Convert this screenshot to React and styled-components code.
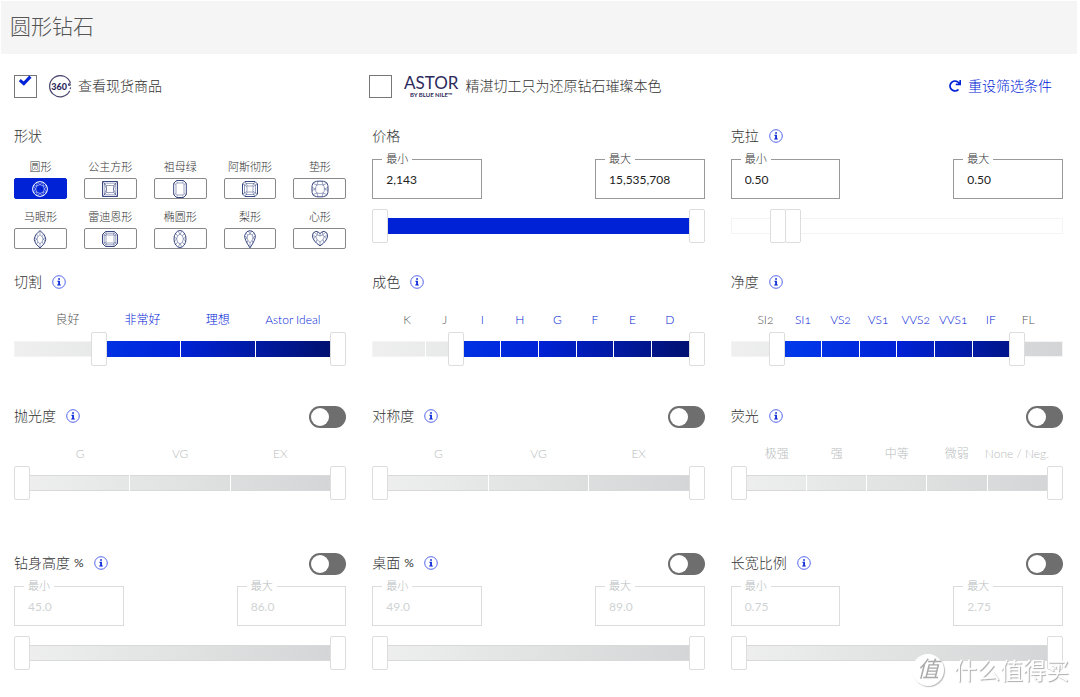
import React, { useId, useState } from 'react';
import styled, { createGlobalStyle } from 'styled-components';
import { FaRedo } from 'react-icons/fa';

const GlobalStyle = createGlobalStyle`
    * {
        box-sizing: border-box;
    }
    body {
        margin: 0;
        background: #fff;
        color: #333;
        font-family: Lato, 'Noto Sans CJK SC', sans-serif;
        font-size: 14px;
        font-weight: 300;
        line-height: 20px;
    }
    button, input {
        font: inherit;
        color: inherit;
    }
`;

const thumbWidth = 16;

const shapes = [
    { key: 'round', name: '圆形' },
    { key: 'princess', name: '公主方形' },
    { key: 'emerald', name: '祖母绿' },
    { key: 'asscher', name: '阿斯彻形' },
    { key: 'cushion', name: '垫形' },
    { key: 'marquise', name: '马眼形' },
    { key: 'radiant', name: '雷迪恩形' },
    { key: 'oval', name: '椭圆形' },
    { key: 'pear', name: '梨形' },
    { key: 'heart', name: '心形' },
];

const shapePaths = {
    round: (
        <>
            <circle cx="9" cy="9" r="7.4" />
            <path d="M9 4.6 12.1 5.9 13.4 9 12.1 12.1 9 13.4 5.9 12.1 4.6 9 5.9 5.9Z" />
            <path d="M9 4.6 6.2 2.2M9 4.6 11.8 2.2M12.1 5.9V2.3M12.1 5.9H15.7M13.4 9 15.8 6.2M13.4 9 15.8 11.8M12.1 12.1H15.7M12.1 12.1V15.7M9 13.4 11.8 15.8M9 13.4 6.2 15.8M5.9 12.1V15.7M5.9 12.1H2.3M4.6 9 2.2 11.8M4.6 9 2.2 6.2M5.9 5.9H2.3M5.9 5.9V2.3" />
        </>
    ),
    princess: (
        <>
            <path d="M1.5 1.5H16.5V16.5H1.5Z" />
            <path d="M5.5 5.5H12.5V12.5H5.5ZM3.2 3.2H14.8V14.8H3.2ZM1.5 1.5 5.5 5.5M16.5 1.5 12.5 5.5M16.5 16.5 12.5 12.5M1.5 16.5 5.5 12.5M3.2 3.2 5.5 9 3.2 14.8M14.8 3.2 12.5 9 14.8 14.8" />
        </>
    ),
    emerald: (
        <>
            <path d="M5.5.5H12.5L15.3 3.3V14.7L12.5 17.5H5.5L2.7 14.7V3.3Z" />
            <path d="M6.3 3H11.7L13 4.3V13.7L11.7 15H6.3L5 13.7V4.3ZM5.5.5 6.3 3M12.5.5 11.7 3M15.3 3.3 13 4.3M15.3 14.7 13 13.7M12.5 17.5 11.7 15M5.5 17.5 6.3 15M2.7 14.7 5 13.7M2.7 3.3 5 4.3" />
        </>
    ),
    asscher: (
        <>
            <path d="M4 1.5H14L16.5 4V14L14 16.5H4L1.5 14V4Z" />
            <path d="M5 3.5H13L14.5 5V13L13 14.5H5L3.5 13V5ZM6.5 6H11.5L12 6.5V11.5L11.5 12H6.5L6 11.5V6.5ZM4 1.5 6.5 6M14 1.5 11.5 6M16.5 4 12 6.5M16.5 14 12 11.5M14 16.5 11.5 12M4 16.5 6.5 12M1.5 14 6 11.5M1.5 4 6 6.5" />
        </>
    ),
    cushion: (
        <>
            <path d="M5.5 1.3Q9 .9 12.5 1.3Q16.7 1.8 16.9 5.5Q17.2 9 16.9 12.5Q16.7 16.2 12.5 16.7Q9 17.1 5.5 16.7Q1.3 16.2 1.1 12.5Q.8 9 1.1 5.5Q1.3 1.8 5.5 1.3Z" />
            <path d="M6 5Q9 4 12 5Q13.4 5.5 13.4 9Q13.4 12.5 12 13Q9 14 6 13Q4.6 12.5 4.6 9Q4.6 5.5 6 5ZM7 1.2 6 5 2.1 3.4M11 1.2 12 5 15.9 3.4M1 7.5 4.6 9 1 10.5M17 7.5 13.4 9 17 10.5M7 16.8 6 13 2.1 14.6M11 16.8 12 13 15.9 14.6" />
        </>
    ),
    marquise: (
        <>
            <path d="M9 .5Q14.8 5 14.8 9.2Q14.8 13.4 9 18Q3.2 13.4 3.2 9.2Q3.2 5 9 .5Z" />
            <path d="M9 4.8 11.2 6.6 12 9.2 11.2 11.8 9 13.8 6.8 11.8 6 9.2 6.8 6.6ZM9 .5V4.8M9 18V13.8M11.2 6.6 12.6 4M6.8 6.6 5.4 4M12 9.2 14.6 7.4M12 9.2 14.6 11M6 9.2 3.4 7.4M6 9.2 3.4 11M11.2 11.8 12.6 14.4M6.8 11.8 5.4 14.4" />
        </>
    ),
    radiant: (
        <>
            <path d="M4.5 1.5H13.5L16.5 4.5V13.5L13.5 16.5H4.5L1.5 13.5V4.5Z" />
            <path d="M5.5 5H12.5L13 5.5V12.5L12.5 13H5.5L5 12.5V5.5ZM5 3.2H13L14.8 5V13L13 14.8H5L3.2 13V5ZM4.5 1.5 5.5 5M13.5 1.5 12.5 5M16.5 4.5 13 5.5M16.5 13.5 13 12.5M13.5 16.5 12.5 13M4.5 16.5 5.5 13M1.5 13.5 5 12.5M1.5 4.5 5 5.5" />
        </>
    ),
    oval: (
        <>
            <ellipse cx="9" cy="9" rx="6" ry="8.5" />
            <path d="M9 4.2 11.4 5.8 12.4 9 11.4 12.2 9 13.8 6.6 12.2 5.6 9 6.6 5.8ZM9 4.2 7 1.2M9 4.2 11 1.2M11.4 5.8 13.4 3.4M12.4 9 14.8 6.6M12.4 9 14.8 11.4M11.4 12.2 13.4 14.6M9 13.8 11 16.8M9 13.8 7 16.8M6.6 12.2 4.6 14.6M5.6 9 3.2 11.4M5.6 9 3.2 6.6M6.6 5.8 4.6 3.4" />
        </>
    ),
    pear: (
        <>
            <path d="M9 .8Q13 .8 14.3 5.6Q14.8 9.5 9 17.8Q3.2 9.5 3.7 5.6Q5 .8 9 .8Z" />
            <path d="M9 4 11.2 5 12 7.6 11 10.4 9 13 7 10.4 6 7.6 6.8 5ZM9 4 7.4 1M9 4 10.6 1M11.2 5 13.2 3M12 7.6 14.3 6M12 7.6 13.6 9.8M6.8 5 4.8 3M6 7.6 3.7 6M6 7.6 4.4 9.8M9 13V17.8M11 10.4 12 12.8M7 10.4 6 12.8" />
        </>
    ),
    heart: (
        <>
            <path d="M9 3.6Q11 1.2 13.2 1.4Q16.6 2.2 16.6 5.8Q16 11.4 9 15.8Q2 11.4 1.4 5.8Q1.4 2.2 4.8 1.4Q7 1.2 9 3.6Z" />
            <path d="M9 6 11.8 4.8 13.2 6.6 12 9.6 9 12 6 9.6 4.8 6.6 6.2 4.8ZM9 6V3.6M11.8 4.8 11.4 2M11.8 4.8 14.6 2.2M13.2 6.6 16.6 5.4M13.2 6.6 15.6 9M12 9.6 13 12.8M9 12V15.8M6 9.6 5 12.8M4.8 6.6 1.4 5.4M4.8 6.6 2.4 9M6.2 4.8 6.6 2M6.2 4.8 3.4 2.2" />
        </>
    ),
};

const InfoButton = ({ about }) => (
    <Info type="button" aria-label={about}>
        <svg width="14" height="14" viewBox="0 0 14 14">
            <circle cx="7" cy="7" r="6.3" fill="none" stroke="#5566ee" />
            <path
                d="M6.2 3.2H7.9V4.7H6.2ZM5.4 5.7H7.9V9.4H8.8V10.5H5.2V9.4H6.2V6.8H5.4Z"
                fill="#0022d6"
            />
        </svg>
    </Info>
);

const FilterHead = ({ title, unit, info, toggle }) => (
    <Head>
        <h2>{title}</h2>
        {unit && <Unit>{unit}</Unit>}
        {info && <InfoButton about={title} />}
        {toggle && <Toggle type="checkbox" role="switch" aria-label={title} />}
    </Head>
);

const Bound = ({ label, value, muted }) => {
    const id = useId();
    return (
        <BoundBox $muted={muted}>
            <legend>
                <label htmlFor={id}>{label}</label>
            </legend>
            <input id={id} type="text" defaultValue={value} disabled={muted} />
        </BoundBox>
    );
};

const Bounds = ({ min, max, muted }) => (
    <BoundsRow>
        <Bound label="最小" value={min} muted={muted} />
        <Bound label="最大" value={max} muted={muted} />
    </BoundsRow>
);

const RangeSlider = ({ title, from = 0, to = 1000, segments = 1, tone = 'grade', muted }) => {
    const [low, setLow] = useState(from);
    const [high, setHigh] = useState(to);
    return (
        <SliderBox>
            <Track $tone={tone} $muted={muted} />
            {!muted && tone !== 'empty' && (
                <Fill
                    $tone={tone}
                    style={{
                        clipPath: `inset(0 ${100 - high / 10}% 0 ${low / 10}%)`,
                    }}
                />
            )}
            <Ticks>
                {Array.from({ length: segments }, (_, i) => (
                    <span key={i} />
                ))}
            </Ticks>
            <Range
                type="range"
                aria-label={`${title} 最小`}
                max="1000"
                value={low}
                disabled={muted}
                onChange={(e) => setLow(Math.min(Number(e.target.value), high))}
            />
            <Range
                type="range"
                aria-label={`${title} 最大`}
                max="1000"
                value={high}
                disabled={muted}
                onChange={(e) => setHigh(Math.max(Number(e.target.value), low))}
            />
        </SliderBox>
    );
};

const GradeFilter = ({ title, grades, active = [], from, to, muted }) => (
    <section>
        <FilterHead title={title} info toggle={muted} />
        <Grades $muted={muted}>
            {grades.map((grade) => (
                <Grade key={grade} $active={active.includes(grade)}>
                    {grade}
                </Grade>
            ))}
        </Grades>
        <RangeSlider
            title={title}
            segments={grades.length}
            from={from}
            to={to}
            muted={muted}
        />
    </section>
);

const NumberFilter = ({ title, unit, info, min, max, muted, ...slider }) => (
    <section>
        <FilterHead title={title} unit={unit} info={info} toggle={muted} />
        <Bounds min={min} max={max} muted={muted} />
        <RangeSlider title={title} muted={muted} {...slider} />
    </section>
);

const ShapeFilter = () => {
    const [picked, setPicked] = useState('round');
    return (
        <section>
            <FilterHead title="形状" />
            <ShapeGrid>
                {shapes.map(({ key, name }) => (
                    <div key={key}>
                        <ShapeName id={`shape-${key}`}>{name}</ShapeName>
                        <ShapeButton
                            type="button"
                            aria-labelledby={`shape-${key}`}
                            aria-pressed={picked === key}
                            $picked={picked === key}
                            onClick={() => setPicked(key)}
                        >
                            <svg width="18" height="18" viewBox="0 0 18 18">
                                {shapePaths[key]}
                            </svg>
                        </ShapeButton>
                    </div>
                ))}
            </ShapeGrid>
        </section>
    );
};

const CheckBox = ({ id, initial }) => {
    const [checked, setChecked] = useState(initial);
    return (
        <CheckWrapper>
            <input
                id={id}
                type="checkbox"
                checked={checked}
                onChange={() => setChecked(!checked)}
            />
            {checked && (
                <svg width="23" height="23" viewBox="0 0 23 23">
                    <path d="M5.8 5.2 9.8 8.6 16.4 1.6" />
                </svg>
            )}
        </CheckWrapper>
    );
};

const App = () => (
    <>
        <GlobalStyle />
        <TitleBar>
            <h1>圆形钻石</h1>
        </TitleBar>
        <Content>
            <TopBar>
                <Option>
                    <CheckBox id="in-stock" initial={true} />
                    <Spin width="24" height="24" viewBox="0 0 24 24">
                        <path d="M22.4 8.2A10.6 10.6 0 1 0 21.8 15.8" />
                        <path d="M22.6 12.4 22.2 14.2" />
                        <circle cx="21.4" cy="9.6" r=".9" />
                        <text x="11.2" y="15.3" textAnchor="middle">
                            360
                        </text>
                    </Spin>
                    <label htmlFor="in-stock">查看现货商品</label>
                </Option>
                <Option>
                    <CheckBox id="astor" initial={false} />
                    <AstorLogo>
                        <b>ASTOR</b>
                        <small>BY BLUE NILE™</small>
                    </AstorLogo>
                    <label htmlFor="astor">精湛切工只为还原钻石璀璨本色</label>
                </Option>
                <Reset type="button">
                    <FaRedo size={12} />
                    重设筛选条件
                </Reset>
            </TopBar>
            <FilterRow $space={23}>
                <ShapeFilter />
                <NumberFilter title="价格" min="2,143" max="15,535,708" tone="solid" />
                <NumberFilter
                    title="克拉"
                    info
                    min="0.50"
                    max="0.50"
                    tone="empty"
                    from={123}
                    to={171}
                />
            </FilterRow>
            <FilterRow $space={40}>
                <GradeFilter
                    title="切割"
                    grades={['良好', '非常好', '理想', 'Astor Ideal']}
                    active={['非常好', '理想', 'Astor Ideal']}
                    from={242}
                />
                <GradeFilter
                    title="成色"
                    grades={['K', 'J', 'I', 'H', 'G', 'F', 'E', 'D']}
                    active={['I', 'H', 'G', 'F', 'E', 'D']}
                    from={238}
                />
                <GradeFilter
                    title="净度"
                    grades={['SI2', 'SI1', 'VS2', 'VS1', 'VVS2', 'VVS1', 'IF', 'FL']}
                    active={['SI1', 'VS2', 'VS1', 'VVS2', 'VVS1', 'IF']}
                    from={121}
                    to={880}
                />
            </FilterRow>
            <FilterRow $space={53}>
                <GradeFilter title="抛光度" grades={['G', 'VG', 'EX']} muted />
                <GradeFilter title="对称度" grades={['G', 'VG', 'EX']} muted />
                <GradeFilter
                    title="荧光"
                    grades={['极强', '强', '中等', '微弱', 'None / Neg.']}
                    muted
                />
            </FilterRow>
            <FilterRow $space={0}>
                <NumberFilter title="钻身高度" unit="%" info min="45.0" max="86.0" muted />
                <NumberFilter title="桌面" unit="%" info min="49.0" max="89.0" muted />
                <NumberFilter title="长宽比例" info min="0.75" max="2.75" muted />
            </FilterRow>
        </Content>
        <Watermark>
            <span>值</span>
            什么值得买
        </Watermark>
    </>
);

const TitleBar = styled.header`
    margin: 1px 3px 0 1px;
    padding: 11px 9px 14px;
    background: #f5f5f5;
    h1 {
        margin: 0;
        color: #555;
        font-size: 21px;
        font-weight: 300;
        line-height: 28px;
    }
`;

const Content = styled.main`
    padding: 21px 17px 26px 14px;
`;

const TopBar = styled.div`
    display: grid;
    grid-template-columns: repeat(3, 1fr);
    gap: 16px;
    align-items: center;
    margin-bottom: 28px;
`;

const Option = styled.div`
    display: flex;
    align-items: center;
    height: 23px;
    white-space: nowrap;
    label {
        padding-bottom: 2px;
    }
`;

const CheckWrapper = styled.span`
    display: grid;
    flex: none;
    input,
    svg {
        grid-area: 1 / 1;
    }
    input {
        appearance: none;
        width: 23px;
        height: 23px;
        margin: 0;
        border: 1px solid #777;
        background: #fff;
    }
    svg {
        pointer-events: none;
        fill: none;
        stroke: #0022d6;
        stroke-width: 3;
    }
`;

const Spin = styled.svg`
    flex: none;
    margin: 0 6px 0 11px;
    fill: none;
    stroke: #4a466e;
    stroke-width: 1.2;
    text {
        fill: #2d2a5c;
        stroke: none;
        font-size: 9px;
        font-weight: 900;
    }
`;

const AstorLogo = styled.span`
    display: flex;
    flex-direction: column;
    align-items: center;
    margin: 0 7px 0 12px;
    padding-bottom: 1px;
    color: #2d2a5c;
    b {
        font-size: 17px;
        font-weight: 400;
        line-height: 16px;
    }
    small {
        font-size: 6px;
        font-weight: 700;
        line-height: 7px;
    }
`;

const Reset = styled.button`
    display: flex;
    align-items: center;
    justify-self: end;
    gap: 7px;
    margin-right: 11px;
    padding: 0 0 2px;
    border: 0;
    background: none;
    color: #0022d6;
    cursor: pointer;
`;

const FilterRow = styled.div`
    display: grid;
    grid-template-columns: repeat(3, minmax(0, 1fr));
    gap: 26px;
    margin-bottom: ${(props) => props.$space}px;
`;

const Head = styled.div`
    display: flex;
    align-items: center;
    height: 20px;
    h2 {
        margin: 0;
        font-size: 14px;
        font-weight: 300;
    }
`;

const Unit = styled.span`
    margin-left: 4px;
    font-size: 12px;
    font-weight: 400;
`;

const Info = styled.button`
    display: flex;
    margin: 0 0 1px 10px;
    padding: 0;
    border: 0;
    background: none;
    cursor: pointer;
`;

const Toggle = styled.input`
    appearance: none;
    display: flex;
    width: 37px;
    height: 22px;
    margin: 2px 0 0 auto;
    padding: 2px;
    border-radius: 11px;
    background: #6e6e6e;
    &::before {
        content: '';
        width: 18px;
        height: 18px;
        border-radius: 50%;
        background: #fff;
    }
    &:checked {
        justify-content: flex-end;
        background: #0022d6;
    }
`;

const ShapeGrid = styled.div`
    display: grid;
    grid-template-columns: repeat(5, minmax(0, 1fr));
    gap: 10px 17px;
    margin-top: 13px;
`;

const ShapeName = styled.div`
    margin-bottom: 3px;
    font-size: 11px;
    line-height: 16px;
    text-align: center;
    white-space: nowrap;
`;

const ShapeButton = styled.button`
    display: flex;
    align-items: center;
    justify-content: center;
    width: 100%;
    height: 21px;
    padding: 0;
    border: 1px solid ${(props) => (props.$picked ? '#0022d6' : '#888')};
    border-radius: 2px;
    background: ${(props) => (props.$picked ? '#0022d6' : '#fff')};
    cursor: pointer;
    svg {
        fill: none;
        stroke: ${(props) => (props.$picked ? '#fff' : '#3a4884')};
        stroke-width: 0.5;
    }
    svg > :first-child {
        stroke-width: 1;
    }
`;

const BoundsRow = styled.div`
    display: flex;
    justify-content: space-between;
    margin-top: 7px;
`;

const BoundBox = styled.fieldset`
    width: 33%;
    min-width: 0;
    height: 46px;
    margin: 0;
    padding: 0 13px;
    border: 1px solid ${(props) => (props.$muted ? '#dcdcdc' : '#999')};
    color: ${(props) => (props.$muted ? '#b8bcbd' : '#333')};
    legend {
        margin-left: -4px;
        padding: 0 4px;
        font-size: 11px;
        line-height: 12px;
    }
    label {
        display: block;
    }
    input {
        display: block;
        width: 100%;
        height: 28px;
        padding: 0;
        border: 0;
        outline: 0;
        background: none;
        color: ${(props) => (props.$muted ? '#d0d3d4' : '#222')};
        font-size: 12px;
        font-weight: 400;
    }
`;

const Grades = styled.div`
    display: flex;
    margin: 18px 0 2px;
    padding: 0 ${thumbWidth}px;
    color: ${(props) => (props.$muted ? '#b8bcbd' : '#555')};
    font-size: 12px;
    font-variant-numeric: oldstyle-nums;
`;

const Grade = styled.span`
    flex: 1 1 0;
    min-width: 0;
    display: flex;
    justify-content: center;
    white-space: nowrap;
    color: ${(props) => (props.$active ? '#0022d6' : 'inherit')};
`;

const SliderBox = styled.div`
    display: grid;
    align-items: center;
    margin-top: 10px;
    ${Grades} + & {
        margin-top: 0;
    }
    & > * {
        grid-area: 1 / 1;
    }
`;

const Track = styled.div`
    height: 16px;
    border: 1px solid ${(props) => (props.$muted ? '#d8dada' : '#f4f4f4')};
    background: ${(props) =>
        props.$tone === 'empty'
            ? '#fff'
            : 'linear-gradient(to right, #efefef, #e0e3e2 50%, #d3d4d6)'};
`;

const Fill = styled.div`
    height: 16px;
    background: ${(props) =>
        props.$tone === 'solid'
            ? '#0022d6'
            : 'linear-gradient(to right, #0045f5, #0022d6 50%, #000f66)'};
`;

const Ticks = styled.div`
    z-index: 1;
    display: flex;
    height: 16px;
    padding: 0 ${thumbWidth}px;
    span {
        flex: 1;
    }
    span + span {
        border-left: 1px solid #fff;
    }
`;

const Range = styled.input`
    appearance: none;
    z-index: 2;
    width: 100%;
    height: 34px;
    margin: 0;
    background: none;
    pointer-events: none;
    &::-webkit-slider-thumb {
        appearance: none;
        width: ${thumbWidth}px;
        height: 34px;
        border: 1px solid #ddd;
        border-radius: 2px;
        background: #fff;
        pointer-events: auto;
    }
    &::-moz-range-thumb {
        width: ${thumbWidth}px;
        height: 34px;
        border: 1px solid #ddd;
        border-radius: 2px;
        background: #fff;
        pointer-events: auto;
    }
`;

const Watermark = styled.div`
    position: fixed;
    z-index: 3;
    right: 11px;
    bottom: 11px;
    display: flex;
    align-items: center;
    gap: 10px;
    color: #fff;
    font-size: 23px;
    font-weight: 400;
    line-height: 32px;
    text-shadow: 1px 1px 1px #aaa;
    pointer-events: none;
    span {
        width: 32px;
        height: 32px;
        border-radius: 50%;
        background: #fff;
        box-shadow: 1px 1px 1px #bbb;
        color: #aaa;
        font-size: 22px;
        font-style: italic;
        line-height: 30px;
        text-align: center;
        text-shadow: none;
    }
`;

export default App;
